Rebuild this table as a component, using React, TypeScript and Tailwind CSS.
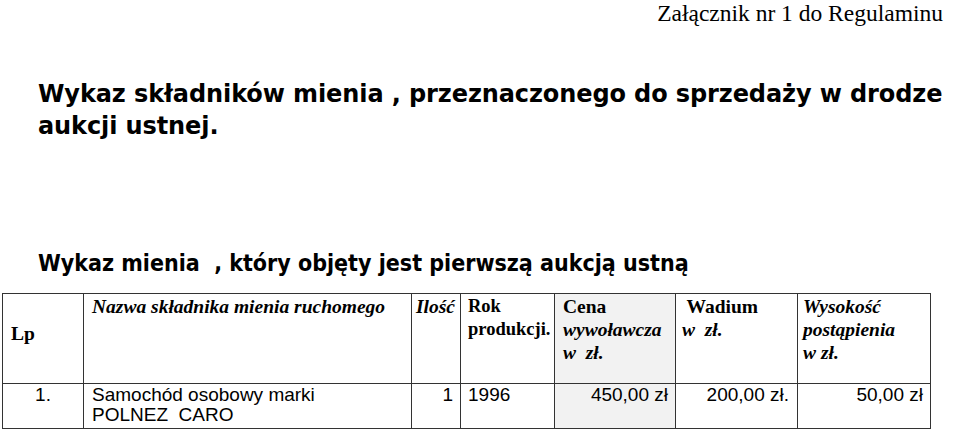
const serif = "font-['Liberation_Serif','Times_New_Roman',serif]";
const sans = "font-['Liberation_Sans',Arial,sans-serif]";

export default function App() {
  return (
    <div className="w-[959px] h-[431px] overflow-hidden bg-white text-black">
      <div className="flex justify-end pr-[16px]">
        <p className={`${serif} text-[23.5px] leading-[26px] whitespace-nowrap`}>
          Załącznik nr 1 do Regulaminu
        </p>
      </div>

      <h1 className="mt-[52px] pl-[38px] font-['DejaVu_Sans',Verdana,sans-serif] font-bold text-[24px] leading-[32px] whitespace-nowrap tracking-[-0.1px]">
        Wykaz składników mienia , przeznaczonego do sprzedaży w drodze
        <br />
        aukcji ustnej.
      </h1>

      <h2 className="mt-[106px] pl-[38px] font-['DejaVu_Sans_Condensed','DejaVu_Sans',sans-serif] font-bold text-[23px] leading-[30px] whitespace-nowrap">
        Wykaz mienia &nbsp;, który objęty jest pierwszą aukcją ustną
      </h2>

      <div className="pl-[2px] mt-[15px]">
        <table className="table-fixed border-collapse w-[928px]">
          <colgroup>
            <col className="w-[81px]" />
            <col className="w-[328px]" />
            <col className="w-[49px]" />
            <col className="w-[94px]" />
            <col className="w-[121px]" />
            <col className="w-[122px]" />
            <col className="w-[133px]" />
          </colgroup>
          <thead>
            <tr className={`${serif} text-[19.5px] leading-[23px] h-[90px]`}>
              <th className="border border-[#333] align-top text-left font-bold pl-[8px] pt-[28px]">
                Lp
              </th>
              <th className="border border-[#333] align-top text-left font-bold italic pl-[8px] pt-[1px]">
                Nazwa składnika mienia ruchomego
              </th>
              <th className="border border-[#333] align-top text-left font-bold italic pl-[4px] pt-[1px]">
                Ilość
              </th>
              <th className="border border-[#333] align-top text-left font-bold text-[18.5px] pl-[7px] pt-[1px]">
                Rok
                <br />
                produkcji.
              </th>
              <th className="border border-[#333] align-top text-left font-bold pl-[8px] pt-[1px] bg-[#f2f2f2]">
                Cena
                <br />
                <span className="italic">wywoławcza</span>
                <br />
                <span className="italic whitespace-pre">w  zł.</span>
              </th>
              <th className="border border-[#333] align-top text-left font-bold pl-[6px] pt-[1px]">
                <span className="whitespace-pre"> Wadium</span>
                <br />
                <span className="italic whitespace-pre">w  zł.</span>
              </th>
              <th className="border border-[#333] align-top text-left font-bold italic pl-[5px] pt-[1px]">
                Wysokość
                <br />
                postąpienia
                <br />
                w zł.
              </th>
            </tr>
          </thead>
          <tbody>
            <tr className={`${sans} text-[19px] leading-[20px] h-[45px]`}>
              <td className="border border-[#333] align-top text-center pt-[1px]">1.</td>
              <td className="border border-[#333] align-top pl-[8px] pt-[1px]">
                Samochód osobowy marki
                <br />
                <span className="whitespace-pre">POLNEZ  CARO</span>
              </td>
              <td className="border border-[#333] align-top text-right pr-[7px] pt-[1px]">1</td>
              <td className="border border-[#333] align-top pl-[7px] pt-[1px]">1996</td>
              <td className="border border-[#333] align-top text-right pr-[7px] pt-[1px] bg-[#f2f2f2]">
                450,00 zł
              </td>
              <td className="border border-[#333] align-top text-right pr-[8px] pt-[1px]">
                200,00 zł.
              </td>
              <td className="border border-[#333] align-top text-right pr-[7px] pt-[1px]">
                50,00 zł
              </td>
            </tr>
          </tbody>
        </table>
      </div>
    </div>
  );
}
